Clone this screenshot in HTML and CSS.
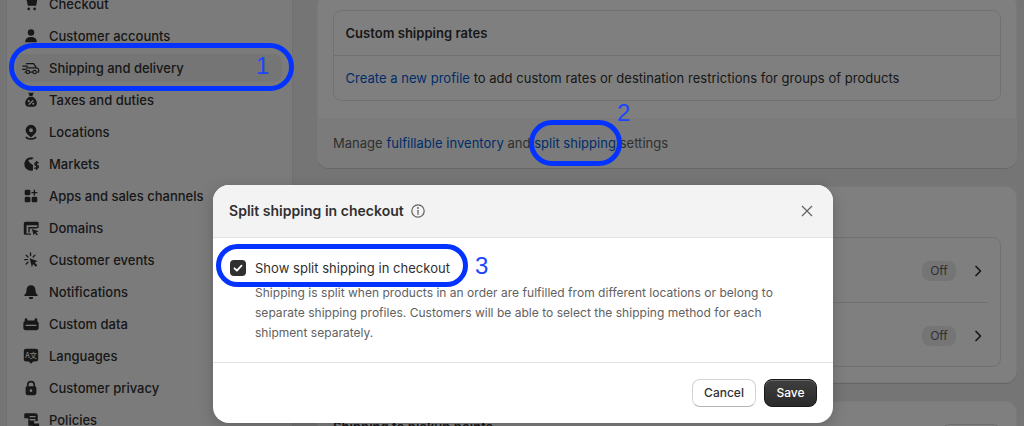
FILE: index.html
```html
<!DOCTYPE html>
<html lang="en">
<head>
<meta charset="utf-8">
<title>Split shipping in checkout</title>
<link rel="stylesheet" href="styles.css">
</head>
<body>
<div class="page">
  <nav class="sidebar">
    <a class="nav-item"><svg class="ico" viewBox="0 0 20 20"><path d="M3 3h2.500l.5 2h11l-1.200 7H6.500L5 5 4.600 4.500H3z"/><circle cx="7.500" cy="15.500" r="1.500"/><circle cx="14" cy="15.500" r="1.500"/></svg><span>Checkout</span></a>
    <a class="nav-item"><svg class="ico" viewBox="0 0 20 20"><circle cx="10" cy="6" r="3.600"/><path d="M3.500 17c0-4 2.600-6 6.500-6s6.500 2 6.500 6z"/></svg><span>Customer accounts</span></a>
    <a class="nav-item active"><svg class="ico ico-line" viewBox="0 0 20 20"><path d="M5 5.200h8l3 4.600c1.300.3 2.500.8 2.500 2v2.700h-1.300M11.700 14.500H8.500M4.300 14.500H3.300M5 9.800h11M1 8h5M.5 11.500h4"/><circle cx="6.500" cy="14.500" r="1.900"/><circle cx="14" cy="14.500" r="1.900"/></svg><span>Shipping and delivery</span></a>
    <a class="nav-item"><svg class="ico" viewBox="0 0 20 20"><path fill-rule="evenodd" d="M7 2h6l-1.500 3.500h-3zM8 6.500h4C15 8.500 16.500 11 16.500 13.500c0 2.500-2 4-4 4h-5c-2 0-4-1.500-4-4C3.500 11 5 8.500 8 6.500zM7.500 10a1.200 1.200 0 1 0 0 2.400 1.200 1.200 0 0 0 0-2.400zm5 3a1.200 1.200 0 1 0 0 2.400 1.200 1.200 0 0 0 0-2.400zM12 9.800l-5 5 1 1 5-5z"/></svg><span>Taxes and duties</span></a>
    <a class="nav-item"><svg class="ico" viewBox="0 0 20 20"><path fill-rule="evenodd" d="M10 2a6 6 0 0 1 6 6c0 3-3 5.500-6 8-3-2.500-6-5-6-8a6 6 0 0 1 6-6zm0 3.800a2.200 2.200 0 1 0 0 4.400 2.200 2.200 0 0 0 0-4.400z"/><path d="M4 15.500c-.6 1.700 2.500 3 6 3s6.600-1.300 6-3l-1.500-.5c.3.800-2 2-4.500 2s-4.800-1.200-4.500-2z"/></svg><span>Locations</span></a>
    <a class="nav-item"><svg class="ico" viewBox="0 0 20 20"><path d="M10 2.500a7.500 7.500 0 0 0-7.500 7.500A7.500 7.500 0 0 0 10 17.500c.8 0 1.500-.1 2.200-.3V11L9 9 7 6.500l1-1.500h3l2-1.700A7.500 7.500 0 0 0 10 2.500z"/><path class="stroke" d="M18 8.500h-2.300a1.300 1.300 0 0 0 0 3h1a1.300 1.300 0 0 1 0 3H14M16.200 7v9"/></svg><span>Markets</span></a>
    <a class="nav-item"><svg class="ico" viewBox="0 0 20 20"><rect x="3" y="3" width="6.300" height="6.300" rx="1.500"/><rect x="3" y="10.700" width="6.300" height="6.300" rx="1.500"/><rect x="10.700" y="10.700" width="6.300" height="6.300" rx="1.500"/><path d="M13 3h1.500v2.500H17V7h-2.500v2.500H13V7h-2.500V5.500H13z"/></svg><span>Apps and sales channels</span></a>
    <a class="nav-item"><svg class="ico" viewBox="0 0 20 20"><path fill-rule="evenodd" d="M4 3h13A1.500 1.500 0 0 1 18.500 4.500V10H17V7H5v9h5v1.500H3.500A1.500 1.500 0 0 1 2 16V5a2 2 0 0 1 2-2z"/><path d="M7 9h10v1.500H8.500V15H7zM11 11l7.500 2.700-2.800 1.200 2 2.300-1.200 1-2-2.300L13 18z"/></svg><span>Domains</span></a>
    <a class="nav-item"><svg class="ico" viewBox="0 0 20 20"><path d="M8.500 8l9 3.300-3.500 1.500 3 3-1.700 1.700-3-3L11 18z"/><path class="stroke" d="M9.500 2v3M3 9.500h3M4.600 4.600l2 2M14.400 4.600l-2 2M4.600 14.400l2-2"/></svg><span>Customer events</span></a>
    <a class="nav-item"><svg class="ico" viewBox="0 0 20 20"><path d="M10 2.500c-3 0-5 2.300-5 5.300 0 3-.9 4.200-2.200 5.200-.6.500-.3 1.500.5 1.500h13.400c.8 0 1.100-1 .5-1.500C15.900 12 15 10.800 15 7.800c0-3-2-5.300-5-5.300z"/><path d="M7.500 15.500h5a2.500 2.500 0 0 1-5 0z"/></svg><span>Notifications</span></a>
    <a class="nav-item"><svg class="ico" viewBox="0 0 20 20"><path fill-rule="evenodd" d="M4.500 3.500A1.500 1.500 0 0 1 6 5v1h8V5a1.500 1.500 0 0 1 3 0v2c1 .6 1.500 1.500 1.500 2.500v5c0 1.400-1.100 2.500-2.500 2.500H4c-1.400 0-2.500-1.100-2.500-2.500v-5C1.500 8.500 2 7.600 3 7V5a1.500 1.500 0 0 1 1.500-1.500zM4 10.800v1.500h12v-1.500z"/></svg><span>Custom data</span></a>
    <a class="nav-item"><svg class="ico" viewBox="0 0 20 20"><path d="M4.500 2h11A2.500 2.500 0 0 1 18 4.500v9a2.500 2.500 0 0 1-2.500 2.500h-3L10 18.500 7.500 16h-3A2.500 2.500 0 0 1 2 13.500v-9A2.500 2.500 0 0 1 4.500 2z"/><text class="ico-text" x="10" y="12.400">A文</text></svg><span>Languages</span></a>
    <a class="nav-item"><svg class="ico" viewBox="0 0 20 20"><path fill-rule="evenodd" d="M10 2a4.500 4.500 0 0 1 4.500 4.500V8c1.100.3 1.500 1.200 1.500 2.200v5.300c0 1.400-1.100 2.500-2.500 2.500h-7A2.500 2.500 0 0 1 4 15.500v-5.300C4 9.200 4.400 8.300 5.500 8V6.500A4.500 4.500 0 0 1 10 2zm0 1.800a2.700 2.700 0 0 0-2.700 2.700V8h5.400V6.500A2.700 2.700 0 0 0 10 3.800zM10 11.500a1.500 1.500 0 1 0 0 3 1.500 1.500 0 0 0 0-3z"/></svg><span>Customer privacy</span></a>
    <a class="nav-item"><svg class="ico" viewBox="0 0 20 20"><path fill-rule="evenodd" d="M4 2.500h11A2.500 2.500 0 0 1 17.500 5v6h-4v5.500H7V8H2.500V4A1.500 1.500 0 0 1 4 2.500zM8.500 5.500V7H15V5.500zM8.500 9v1.500H15V9z"/><path d="M12 14h7v2.500a1.500 1.500 0 0 1-1.500 1.500H12z"/></svg><span>Policies</span></a>
  </nav>

  <main class="main">
    <section class="card card-first">
      <div class="card-body">
        <div class="inset">
          <h3 class="inset-head">Custom shipping rates</h3>
          <p class="inset-row"><a class="link">Create a new profile</a> to add custom rates or destination restrictions for groups of products</p>
        </div>
      </div>
      <p class="card-foot">Manage <a class="link">fulfillable inventory</a> and <a class="link">split shipping</a> settings</p>
    </section>

    <section class="card card-second">
      <div class="inset inset-list">
        <div class="list-row"><span class="pill">Off</span><svg class="chev" viewBox="0 0 20 20"><path d="M8 5.500l4.500 4.500L8 14.500"/></svg></div>
        <div class="list-row list-row-last"><span class="pill">Off</span><svg class="chev" viewBox="0 0 20 20"><path d="M8 5.500l4.500 4.500L8 14.500"/></svg></div>
      </div>
    </section>

    <section class="card card-third">
      <div class="third-head">
        <h3 class="third-title">Shipping to pickup points</h3>
        <span class="third-btn"></span>
      </div>
    </section>
  </main>
</div>

<div class="scrim"></div>

<div class="modal" role="dialog">
  <header class="modal-head">
    <h2 class="modal-title">Split shipping in checkout</h2>
    <svg class="info" viewBox="0 0 16 16"><circle cx="8" cy="8" r="6.200"/><path d="M8 7.300v4"/><circle class="dot" cx="8" cy="5" r=".9"/></svg>
    <svg class="close" viewBox="0 0 16 16"><path d="M3 3l10 10M13 3L3 13"/></svg>
  </header>
  <div class="modal-body">
    <label class="check-row">
      <span class="checkbox"><svg viewBox="0 0 16 16"><path d="M4.500 8.300l2.400 2.400 4.600-5"/></svg></span>
      <span>Show split shipping in checkout</span>
    </label>
    <p class="check-desc">Shipping is split when products in an order are fulfilled from different locations or belong to separate shipping profiles. Customers will be able to select the shipping method for each shipment separately.</p>
  </div>
  <footer class="modal-foot">
    <button class="btn btn-plain">Cancel</button>
    <button class="btn btn-primary">Save</button>
  </footer>
</div>

<div class="mark mark-1"></div><span class="num num-1">1</span>
<div class="mark mark-2"></div><span class="num num-2">2</span>
<div class="mark mark-3"></div><span class="num num-3">3</span>
</body>
</html>
```

FILE: styles.css
```css
* { box-sizing: border-box; }
html, body { margin: 0; height: 426px; overflow: hidden; }
body {
  position: relative;
  width: 1024px;
  background: #ebebeb;
  font-family: Inter, "Liberation Sans", sans-serif;
  font-size: 13px;
  line-height: 20px;
  letter-spacing: .025px;
  color: #303030;
}
h2, h3, p { margin: 0; }

.page { display: flex; height: 426px; overflow: hidden; padding-left: 6px; }

.sidebar {
  flex: 0 0 287px;
  height: 470px;
  margin-top: -10px;
  padding: 0 10px 0 9px;
  background: #f7f7f7;
  border-left: 1px solid #e3e3e3;
  border-right: 1px solid #e0e0e0;
  display: flex;
  flex-direction: column;
  gap: 4px;
}
.nav-item {
  display: flex;
  align-items: center;
  height: 28px;
  flex: none;
  padding-left: 6px;
  gap: 9px;
  border-radius: 8px;
  font-weight: 450;
  letter-spacing: 0;
}
.nav-item.active { background: #eaeaea; }
.ico { width: 18px; height: 18px; flex: none; fill: #303030; }
.ico-line { fill: none; stroke: #303030; stroke-width: 1.300; stroke-linecap: round; stroke-linejoin: round; }
.stroke { fill: none; stroke: #303030; stroke-width: 1.500; stroke-linecap: round; }
.ico-text { fill: #f7f7f7; font-size: 8px; font-family: "Noto Sans CJK SC", Inter, sans-serif; text-anchor: middle; }

.main {
  flex: 1;
  min-width: 0;
  padding: 0 7px 0 24px;
  display: flex;
  flex-direction: column;
  gap: 18px;
}
.card {
  flex: none;
  background: #fff;
  border-radius: 12px;
  box-shadow: 0 1px 0 rgba(0,0,0,.12), inset 0 0 0 1px rgba(0,0,0,.04);
}
.card-first { margin-top: -6px; height: 174px; display: flex; flex-direction: column; overflow: hidden; }
.card-body { padding: 16px 16px 17px; }
.inset { border: 1px solid #e3e3e3; border-radius: 8px; }
.inset-head { font-size: 13px; font-weight: 600; line-height: 20px; padding: 12px 11.500px; border-bottom: 1px solid #e3e3e3; }
.inset-row { padding: 12px 11.500px; height: 44px; }
.card-foot {
  flex: 1;
  padding: 15px 16px;
  background: #f7f7f7;
  color: #616161;
}
.link { color: #005bd3; }

.card-second { height: 197px; padding: 51px 16px 16px; }
.inset-list { height: 130px; padding: 0 12px 0 0; }
.list-row {
  height: 65px;
  display: flex;
  align-items: center;
  justify-content: flex-end;
  gap: 12px;
  border-bottom: 1px solid #e3e3e3;
  padding-top: 1px;
}
.list-row-last { border-bottom: 0; }
.pill {
  width: 34px;
  height: 20px;
  border-radius: 8px;
  background: #ebebeb;
  color: #616161;
  font-size: 12px;
  line-height: 20px;
  text-align: center;
}
.chev { width: 20px; height: 20px; fill: none; stroke: #303030; stroke-width: 1.700; stroke-linecap: round; stroke-linejoin: round; }

.card-third { height: 60px; padding: 16px 16px 0; }
.third-head { display: flex; justify-content: space-between; }
.third-title { font-size: 13px; font-weight: 600; line-height: 20px; }
.third-btn { width: 60px; height: 28px; border: 1px solid #dcdcdc; border-radius: 8px; margin-top: 7px; }

.scrim { position: absolute; inset: 0; background: rgba(0,0,0,.5); }

.modal {
  position: absolute;
  left: 213px;
  top: 185px;
  width: 620px;
  height: 238px;
  background: #fff;
  border-radius: 16px;
  overflow: hidden;
  box-shadow: 0 4px 16px rgba(0,0,0,.2);
  display: flex;
  flex-direction: column;
}
.modal-head {
  height: 53px;
  flex: none;
  display: flex;
  align-items: center;
  gap: 6px;
  padding: 0 16px;
  background: #f3f3f3;
  border-bottom: 1px solid #e3e3e3;
}
.modal-title { font-size: 14px; font-weight: 600; line-height: 20px; }
.info { width: 16px; height: 16px; fill: none; stroke: #616161; stroke-width: 1.200; stroke-linecap: round; }
.info .dot { fill: #616161; stroke: none; }
.close { width: 16px; height: 16px; margin-left: auto; margin-right: 2px; fill: none; stroke: #616161; stroke-width: 1.200; }
.modal-body { flex: 1; padding: 20px 16px 0; border-bottom: 1px solid #e3e3e3; }
.check-row { display: flex; align-items: center; gap: 9px; }
.checkbox { width: 16px; height: 16px; margin-left: 1px; flex: none; border-radius: 4px; background: #303030; }
.checkbox svg { display: block; fill: none; stroke: #fff; stroke-width: 1.800; stroke-linecap: round; stroke-linejoin: round; }
.check-desc { margin: 5px 0 0 26px; width: 540px; font-size: 12px; color: #616161; }
.modal-foot { flex: none; height: 60px; display: flex; align-items: center; justify-content: flex-end; gap: 8px; padding: 0 16px; }
.btn {
  height: 28px;
  border-radius: 8px;
  font: 550 12px/20px Inter, "Liberation Sans", sans-serif;
  padding: 0;
}
.btn-plain { width: 64px; background: #fff; color: #303030; border: 1px solid #d4d4d4; border-bottom-color: #b5b5b5; }
.btn-primary { width: 53px; color: #fff; border: 1px solid #1a1a1a; background: linear-gradient(#3f3f3f, #2a2a2a); box-shadow: inset 0 1px 0 rgba(255,255,255,.2); }

.mark { position: absolute; border: 5px solid #0433ff; border-radius: 26px; }
.mark-1 { left: 9px; top: 43px; width: 285px; height: 48px; }
.mark-2 { left: 529px; top: 120px; width: 93px; height: 46px; border-radius: 24px; }
.mark-3 { left: 216px; top: 244px; width: 252px; height: 43px; border-radius: 22px; }
.num { position: absolute; color: #1b46ff; font: 300 24px/28px "Liberation Sans", sans-serif; }
.num-1 { left: 256px; top: 52px; }
.num-2 { left: 617px; top: 99px; }
.num-3 { left: 475px; top: 252px; }
```
